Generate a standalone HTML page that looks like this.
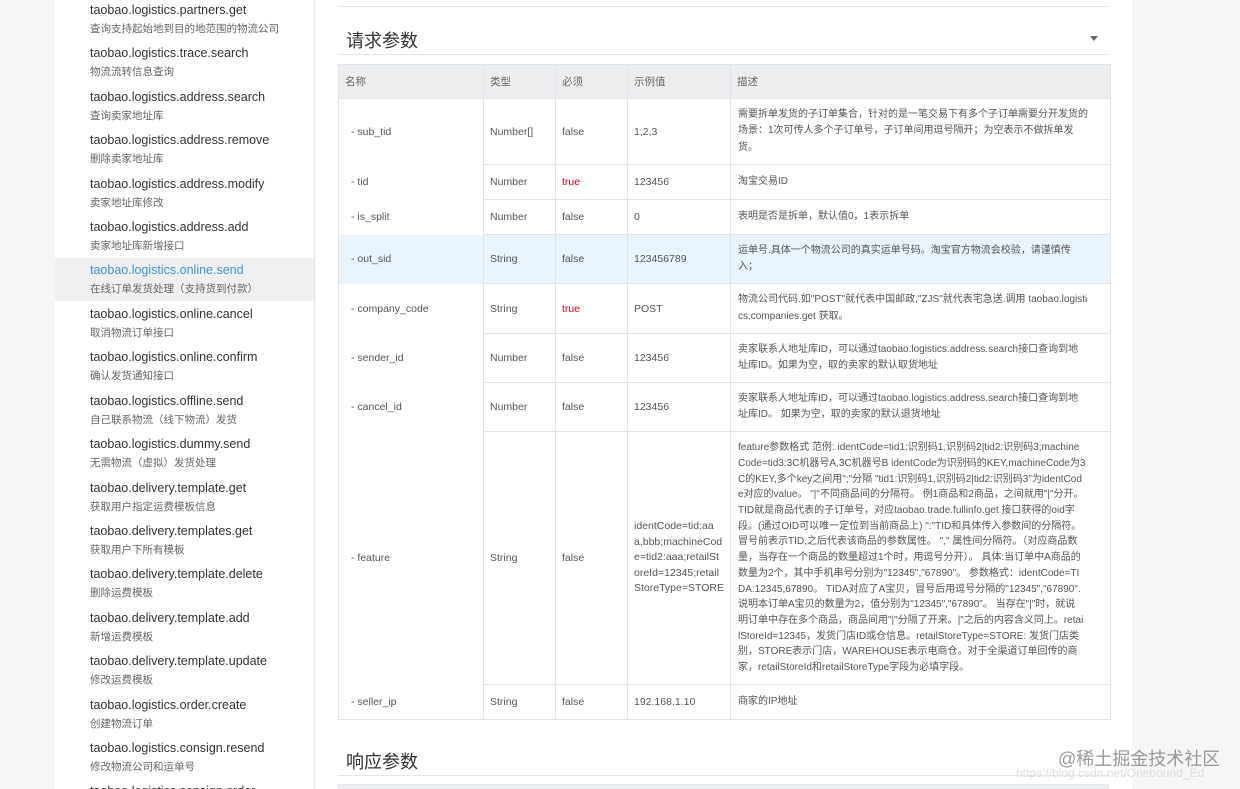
<!DOCTYPE html>
<html style="width:1240px;height:789px;overflow:hidden"><head><meta charset="utf-8"><style>
*{margin:0;padding:0;box-sizing:border-box}
body{width:1240px;height:789px;overflow:hidden;background:#f6f6f6;font-family:"Liberation Sans","Noto Sans CJK SC",sans-serif;position:relative}
.side{position:absolute;left:55px;top:0;width:260px;height:789px;background:#fff;border-right:1px solid #e8e8e8;overflow:hidden}
.it{position:absolute;left:0;width:260px;height:43px}
.it .t{position:absolute;top:3px;left:35px;font-size:12.5px;color:#333;white-space:nowrap}
.it .s{position:absolute;top:21px;left:35px;font-size:10.5px;color:#666;white-space:nowrap}
.it.on{background:#eef0f2}
.it.on .t{color:#4a8fd6}
.main{position:absolute;left:316px;top:0;width:816px;height:789px;background:#fff}
h2{position:absolute;font-weight:normal;font-size:18px;color:#333;left:346px}
.hl{position:absolute;left:338px;width:771px;height:1px;background:#e5e5e5}
table{position:absolute;left:338px;top:64px;width:772px;border-collapse:collapse;table-layout:fixed;font-size:10.5px;color:#555}
td,th{border:1px solid #e1e4e8;padding:0 6px;vertical-align:middle;text-align:left;font-weight:normal;overflow:hidden;white-space:nowrap}
th{background:#eceef0;height:34px;font-size:10.5px;color:#666}
td.n{border-top:none;border-bottom:none;padding-left:12px;color:#555}
td.d{font-size:10px;line-height:16.3px;padding:0 7px;color:#555}
.r{color:#d0021b}
tr.hi td{background:#eaf4fc}
.bot{position:absolute;left:338px;top:784px;width:771px;height:5px;background:#eceef0;border:1px solid #e1e4e8;border-bottom:none}
.wm{position:absolute;left:1058px;top:745px;font-size:18px;color:#999;white-space:nowrap}
.wm2{position:absolute;left:1016px;top:766px;font-size:12px;color:#ddd;white-space:nowrap}
</style></head><body>
<div class="side">
<div class="it" style="top:0"><div class="t">taobao.logistics.partners.get</div><div class="s">查询支持起始地到目的地范围的物流公司</div></div>
<div class="it" style="top:43px"><div class="t">taobao.logistics.trace.search</div><div class="s">物流流转信息查询</div></div>
<div class="it" style="top:87px"><div class="t">taobao.logistics.address.search</div><div class="s">查询卖家地址库</div></div>
<div class="it" style="top:130px"><div class="t">taobao.logistics.address.remove</div><div class="s">删除卖家地址库</div></div>
<div class="it" style="top:174px"><div class="t">taobao.logistics.address.modify</div><div class="s">卖家地址库修改</div></div>
<div class="it" style="top:217px"><div class="t">taobao.logistics.address.add</div><div class="s">卖家地址库新增接口</div></div>
<div class="it on" style="top:258px;height:43px"><div class="t" style="top:5px">taobao.logistics.online.send</div><div class="s" style="top:23px">在线订单发货处理（支持货到付款）</div></div>
<div class="it" style="top:304px"><div class="t">taobao.logistics.online.cancel</div><div class="s">取消物流订单接口</div></div>
<div class="it" style="top:347px"><div class="t">taobao.logistics.online.confirm</div><div class="s">确认发货通知接口</div></div>
<div class="it" style="top:391px"><div class="t">taobao.logistics.offline.send</div><div class="s">自己联系物流（线下物流）发货</div></div>
<div class="it" style="top:434px"><div class="t">taobao.logistics.dummy.send</div><div class="s">无需物流（虚拟）发货处理</div></div>
<div class="it" style="top:478px"><div class="t">taobao.delivery.template.get</div><div class="s">获取用户指定运费模板信息</div></div>
<div class="it" style="top:521px"><div class="t">taobao.delivery.templates.get</div><div class="s">获取用户下所有模板</div></div>
<div class="it" style="top:564px"><div class="t">taobao.delivery.template.delete</div><div class="s">删除运费模板</div></div>
<div class="it" style="top:608px"><div class="t">taobao.delivery.template.add</div><div class="s">新增运费模板</div></div>
<div class="it" style="top:651px"><div class="t">taobao.delivery.template.update</div><div class="s">修改运费模板</div></div>
<div class="it" style="top:695px"><div class="t">taobao.logistics.order.create</div><div class="s">创建物流订单</div></div>
<div class="it" style="top:738px"><div class="t">taobao.logistics.consign.resend</div><div class="s">修改物流公司和运单号</div></div>
<div class="it" style="top:781px"><div class="t">taobao.logistics.consign.order</div></div>
</div>
<div class="main"></div>
<div class="hl" style="top:6px"></div>
<h2 style="top:27px">请求参数</h2>
<div style="position:absolute;left:1090px;top:36px;width:0;height:0;border-left:4px solid transparent;border-right:4px solid transparent;border-top:5px solid #666"></div>
<div class="hl" style="top:54px"></div>
<table>
<colgroup><col style="width:145px"><col style="width:72px"><col style="width:72px"><col style="width:103px"><col style="width:380px"></colgroup>
<tr><th>名称</th><th>类型</th><th>必须</th><th>示例值</th><th>描述</th></tr>
<tr style="height:66px"><td class="n">- sub_tid</td><td>Number[]</td><td>false</td><td>1,2,3</td><td class="d">需要拆单发货的子订单集合，针对的是一笔交易下有多个子订单需要分开发货的<br>场景：1次可传人多个子订单号，子订单间用逗号隔开；为空表示不做拆单发<br>货。</td></tr>
<tr style="height:35px"><td class="n">- tid</td><td>Number</td><td class="r">true</td><td>123456</td><td class="d">淘宝交易ID</td></tr>
<tr style="height:35px"><td class="n">- is_split</td><td>Number</td><td>false</td><td>0</td><td class="d">表明是否是拆单，默认值0，1表示拆单</td></tr>
<tr class="hi" style="height:49px"><td class="n">- out_sid</td><td>String</td><td>false</td><td>123456789</td><td class="d">运单号.具体一个物流公司的真实运单号码。淘宝官方物流会校验，请谨慎传<br>入；</td></tr>
<tr style="height:50px"><td class="n">- company_code</td><td>String</td><td class="r">true</td><td>POST</td><td class="d">物流公司代码.如"POST"就代表中国邮政,"ZJS"就代表宅急送.调用 taobao.logisti<br>cs.companies.get 获取。</td></tr>
<tr style="height:49px"><td class="n">- sender_id</td><td>Number</td><td>false</td><td>123456</td><td class="d">卖家联系人地址库ID，可以通过taobao.logistics.address.search接口查询到地<br>址库ID。如果为空，取的卖家的默认取货地址</td></tr>
<tr style="height:49px"><td class="n">- cancel_id</td><td>Number</td><td>false</td><td>123456</td><td class="d">卖家联系人地址库ID，可以通过taobao.logistics.address.search接口查询到地<br>址库ID。 如果为空，取的卖家的默认退货地址</td></tr>
<tr style="height:253px"><td class="n">- feature</td><td>String</td><td>false</td><td style="line-height:15.6px">identCode=tid:aa<br>a,bbb;machineCod<br>e=tid2:aaa;retailSt<br>oreId=12345;retail<br>StoreType=STORE</td><td class="d" style="line-height:15.7px">feature参数格式 范例: identCode=tid1:识别码1,识别码2|tid2:识别码3;machine<br>Code=tid3:3C机器号A,3C机器号B identCode为识别码的KEY,machineCode为3<br>C的KEY,多个key之间用";"分隔 "tid1:识别码1,识别码2|tid2:识别码3"为identCod<br>e对应的value。 "|"不同商品间的分隔符。 例1商品和2商品，之间就用"|"分开。<br>TID就是商品代表的子订单号，对应taobao.trade.fullinfo.get 接口获得的oid字<br>段。(通过OID可以唯一定位到当前商品上) ":"TID和具体传入参数间的分隔符。<br>冒号前表示TID,之后代表该商品的参数属性。 "," 属性间分隔符。（对应商品数<br>量，当存在一个商品的数量超过1个时，用逗号分开）。 具体:当订单中A商品的<br>数量为2个，其中手机串号分别为"12345","67890"。 参数格式：identCode=TI<br>DA:12345,67890。 TIDA对应了A宝贝，冒号后用逗号分隔的"12345","67890".<br>说明本订单A宝贝的数量为2，值分别为"12345","67890"。 当存在"|"时，就说<br>明订单中存在多个商品，商品间用"|"分隔了开来。|"之后的内容含义同上。retai<br>lStoreId=12345，发货门店ID或仓信息。retailStoreType=STORE: 发货门店类<br>别，STORE表示门店，WAREHOUSE表示电商仓。对于全渠道订单回传的商<br>家，retailStoreId和retailStoreType字段为必填字段。</td></tr>
<tr style="height:35px"><td class="n" style="border-bottom:1px solid #e1e4e8">- seller_ip</td><td>String</td><td>false</td><td>192.168.1.10</td><td class="d">商家的IP地址</td></tr>
</table>
<h2 style="top:748px">响应参数</h2>
<div class="hl" style="top:775px"></div>
<div class="bot"></div>
<div class="wm">@稀土掘金技术社区</div>
<div class="wm2">https://blog.csdn.net/Onebound_Ed</div>
</body></html>
